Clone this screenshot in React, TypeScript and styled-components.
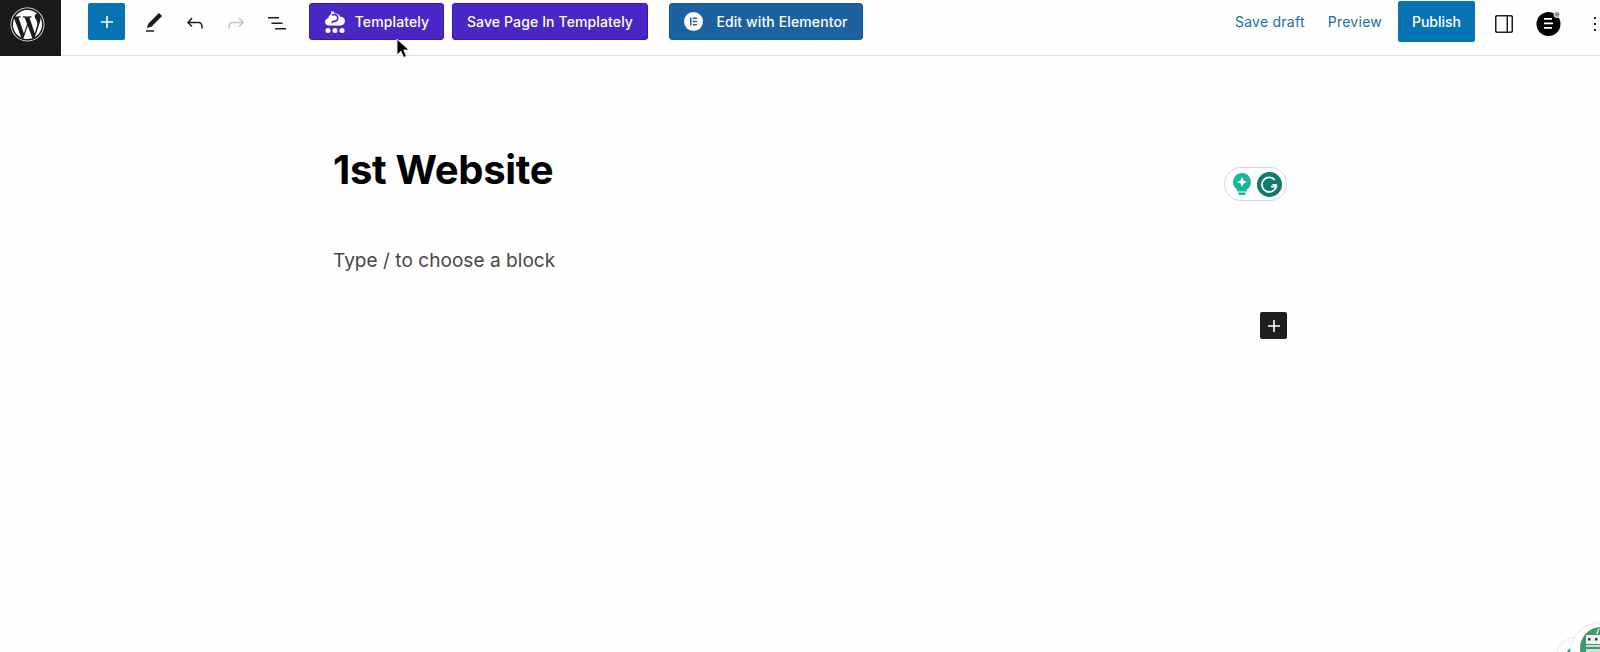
import React from 'react';
import styled, { createGlobalStyle } from 'styled-components';
import { FaWordpress } from 'react-icons/fa';

const GlobalStyle = createGlobalStyle`
  html, body {
    margin: 0;
    padding: 0;
    height: 100%;
    overflow: hidden;
    background: #fefefe;
    font-family: 'Inter', sans-serif;
  }
`;

const Page = styled.div`
  position: relative;
  width: 1600px;
  height: 652px;
  overflow: hidden;
`;

// the bar runs a little past the window, the kebab menu sits almost on the edge
const TopBar = styled.header`
  display: flex;
  justify-content: space-between;
  align-items: flex-start;
  width: 1607px;
  height: 56px;
  box-sizing: border-box;
  border-bottom: 1px solid #e2e2e2;
`;

const BarSide = styled.div`
  display: flex;
  align-items: flex-start;
`;

const LogoTile = styled.div`
  display: flex;
  align-items: center;
  justify-content: center;
  box-sizing: border-box;
  width: 61px;
  height: 56px;
  padding: 0 6px 7px 0;
  background: #1a1a1a;
  color: #fff;
  font-size: 35px;
`;

const AddButton = styled.button`
  display: flex;
  align-items: center;
  justify-content: center;
  width: 37px;
  height: 37px;
  margin: 3px 8px 0 27px;
  padding: 0;
  border: 0;
  border-radius: 2px;
  background: #0873b3;
  color: #fff;
`;

const ToolIcon = styled.button<{ $muted?: boolean }>`
  display: flex;
  align-items: center;
  justify-content: center;
  width: 41px;
  height: 37px;
  margin-top: 4px;
  padding: 0;
  border: 0;
  background: none;
  color: ${p => (p.$muted ? '#c4c4c4' : '#1e1e1e')};
`;

const ActionButton = styled.button<{ $bg: string; $edge: string; $width: number; $left: number; $gap?: number }>`
  display: flex;
  align-items: center;
  justify-content: center;
  gap: ${p => p.$gap ?? 0}px;
  box-sizing: border-box;
  width: ${p => p.$width}px;
  height: 37px;
  margin: 3px 0 0 ${p => p.$left}px;
  padding: 0;
  border: 1px solid ${p => p.$edge};
  border-radius: 3px;
  background: ${p => p.$bg};
  color: #fff;
  font: 500 14px 'Inter', sans-serif;
  letter-spacing: 0.12px;
  white-space: nowrap;
`;

const TextLink = styled.span<{ $left: number }>`
  margin: 13px 0 0 ${p => p.$left}px;
  color: #1b6ea6;
  font-size: 14px;
  line-height: 17px;
  letter-spacing: 0.25px;
`;

const PublishButton = styled.button`
  width: 77px;
  height: 41px;
  margin: 1px 0 0 16px;
  padding: 0;
  border: 0;
  border-radius: 2px;
  background: #0873b3;
  color: #fff;
  font: 500 14px 'Inter', sans-serif;
`;

const SideIcon = styled.div<{ $left: number; $top: number; $size: number }>`
  display: flex;
  margin: ${p => p.$top}px 0 0 ${p => p.$left}px;
  width: ${p => p.$size}px;
  height: ${p => p.$size}px;
  color: #1e1e1e;
`;

const Editor = styled.main`
  display: flex;
  flex-direction: column;
  width: 954px;
  margin-left: 333px;
  padding-top: 90px;
`;

const PostTitle = styled.h1`
  margin: 0;
  color: #000;
  font-size: 40px;
  font-weight: 700;
  line-height: 48px;
  letter-spacing: -0.3px;
`;

const Placeholder = styled.p`
  margin: 52px 0 0;
  color: #46464a;
  font-size: 19px;
  line-height: 30px;
  letter-spacing: 0.05px;
`;

const InserterRow = styled.div`
  display: flex;
  justify-content: flex-end;
  margin-top: 36px;
`;

const Inserter = styled.button`
  display: flex;
  align-items: center;
  justify-content: center;
  width: 27px;
  height: 27px;
  padding: 0;
  border: 0;
  border-radius: 2px;
  background: #1e1e1e;
  color: #fff;
`;

const GrammarlyPill = styled.div`
  position: absolute;
  left: 1224px;
  top: 167px;
  display: flex;
  align-items: center;
  gap: 5px;
  box-sizing: border-box;
  width: 63px;
  height: 34px;
  padding-left: 7px;
  border: 1px solid #cfd8dc;
  border-radius: 17px;
  background: #fff;
`;

const Cursor = styled.svg`
  position: absolute;
  left: 396px;
  top: 38px;
`;

const CornerBubble = styled.div<{ $left: number; $top: number; $size: number }>`
  position: absolute;
  left: ${p => p.$left}px;
  top: ${p => p.$top}px;
  box-sizing: border-box;
  width: ${p => p.$size}px;
  height: ${p => p.$size}px;
  border: 1px solid #e3e8e6;
  border-radius: 50%;
  background: #fff;
`;

const PlusGlyph = ({ size }: { size: number }) => (
  <svg width={size} height={size} viewBox="0 0 24 24" fill="currentColor">
    <path d="M18 11.2h-5.2V6h-1.6v5.2H6v1.6h5.2V18h1.6v-5.2H18z" />
  </svg>
);

const Glyph = ({ d }: { d: string }) => (
  <svg width="24" height="24" viewBox="0 0 24 24" fill="currentColor">
    <path d={d} />
  </svg>
);

const TemplatelyMark = () => (
  <svg width="22" height="24" viewBox="0 0 22 24" fill="#fff">
    <path d="M5 15.5c-2.300 0-4-1.500-4-3.700 0-1.900 1.400-3.400 3.300-3.600.2-1.900 1.300-3.400 2.900-4.200L7 1.500h3l.3 1.700c2.600-.4 5 1 5.900 3.500 2.600-.1 4.800 1.600 4.800 4.400 0 2.600-2 4.400-4.600 4.400z" />
    <path d="M8 5.500a3.400 3.400 0 1 1 1.500 5.700l-1.800 1.600" fill="none" stroke="#4a26c4" strokeWidth="1.600" />
    <circle cx="4" cy="20.5" r="2.500" />
    <circle cx="11" cy="20.5" r="2.500" />
    <circle cx="18" cy="20.5" r="2.500" />
  </svg>
);

const ElementorMark = () => (
  <svg width="19" height="19" viewBox="0 0 19 19">
    <circle cx="9.5" cy="9.5" r="9.5" fill="#fff" />
    <path fill="#1c62a0" d="M6 5.500h1.500v8H6zM9 5.500h4V7H9zM9 8.700h4v1.500H9zM9 12h4v1.500H9z" />
  </svg>
);

const ElementsAvatar = () => (
  <svg width="27" height="27" viewBox="0 0 27 27">
    <circle cx="12.5" cy="14" r="12" fill="#000" />
    <path fill="#fff" d="M8 8h8v1.800H8zM8 12.500h9v1.800H8zM8 17h8v1.800H8z" />
    <circle cx="21" cy="4.500" r="3" fill="#8f8f8f" stroke="#fff" />
  </svg>
);

const Bulb = () => (
  <svg width="20" height="24" viewBox="0 0 20 24">
    <path fill="#15b89a" d="M10 1a9 9 0 0 0-5.500 16c.8.7.8 1.500.8 2.500h9.400c0-1 0-1.800.8-2.500A9 9 0 0 0 10 1z" />
    <path fill="#15b89a" d="M6 20.500h8l-1 2.500H7z" />
    <path fill="#fff" d="M10 5l1.500 3.500L15 10l-3.500 1.500L10 15l-1.500-3.500L5 10l3.500-1.500z" />
  </svg>
);

const GrammarlyBadge = () => (
  <svg width="25" height="25" viewBox="0 0 24 24">
    <circle cx="12" cy="12" r="12" fill="#127a68" />
    <path fill="none" stroke="#fff" strokeWidth="1.700" d="M17 7.500a7 7 0 1 0 1.500 6.500h-5" />
    <path fill="#fff" d="M14 11.500h5v4.500z" />
  </svg>
);

const RobotFace = () => (
  <svg width="30" height="29" viewBox="0 0 30 29">
    <circle cx="30" cy="25" r="21" fill="#3e9a68" />
    <rect x="15" y="12" width="15" height="9" rx="1" fill="#f2f2f2" />
    <rect x="17" y="15" width="2.500" height="2.500" fill="#2f3b3a" />
    <rect x="24" y="15" width="2.500" height="2.500" fill="#2f3b3a" />
    <rect x="15" y="22" width="15" height="2" fill="#cfe0d6" />
    <rect x="15" y="26" width="15" height="3" fill="#cfe0d6" />
    <path d="M25 11l2.500-6 1 .4-2 5.600z" fill="#f2f2f2" />
  </svg>
);

const TealSpot = () => (
  <svg width="24" height="15" viewBox="0 0 24 15">
    <circle cx="19" cy="17" r="10" fill="#15b89a" />
  </svg>
);

export default function App() {
  return (
    <Page>
      <GlobalStyle />
      <TopBar>
        <BarSide>
          <LogoTile>
            <FaWordpress />
          </LogoTile>
          <AddButton>
            <PlusGlyph size={24} />
          </AddButton>
          <ToolIcon>
            <Glyph d="M20.1 5.1L16.9 2 6.2 12.7l-1.3 4.400 4.500-1.300L20.100 5.100zM4 20.800h8v-1.500H4v1.500z" />
          </ToolIcon>
          <ToolIcon>
            <Glyph d="M18.3 11.7c-.6-.6-1.400-.9-2.300-.9H6.700l2.900-3.300-1.100-1-4.500 5L8.500 16l1-1-2.700-2.700H16c.5 0 .9.2 1.300.5 1 1 1 3.400 1 4.500v.3h1.500v-.2c0-1.500 0-4.300-1.500-5.700z" />
          </ToolIcon>
          <ToolIcon $muted>
            <Glyph d="M15.6 6.5l-1.100 1 2.900 3.300H8c-.9 0-1.700.3-2.300.9-1.400 1.500-1.400 4.200-1.400 5.600v.2h1.500v-.3c0-1.100 0-3.500 1-4.500.3-.3.7-.5 1.300-.5h9.200L14.500 15l1.100 1.100 4.600-4.600-4.600-5z" />
          </ToolIcon>
          <ToolIcon>
            <Glyph d="M3 6h11v1.500H3V6zm3.500 5.500h11V13h-11v-1.500zM21 17H10v1.500h11V17z" />
          </ToolIcon>
          <ActionButton $bg="#4a26c4" $edge="#3a18b0" $width={135} $left={12} $gap={9}>
            <TemplatelyMark />
            Templately
          </ActionButton>
          <ActionButton $bg="#4a26c4" $edge="#3a18b0" $width={196} $left={8}>
            Save Page In Templately
          </ActionButton>
          <ActionButton $bg="#1c62a0" $edge="#1a5a92" $width={194} $left={21} $gap={13}>
            <ElementorMark />
            Edit with Elementor
          </ActionButton>
        </BarSide>
        <BarSide>
          <TextLink $left={0}>Save draft</TextLink>
          <TextLink $left={23}>Preview</TextLink>
          <PublishButton>Publish</PublishButton>
          <SideIcon $left={17} $top={12} $size={24}>
            <Glyph d="M19 3H5c-1.100 0-2 .9-2 2v14c0 1.100.9 2 2 2h14c1.100 0 2-.9 2-2V5c0-1.100-.9-2-2-2zM4.500 19V5c0-.3.2-.5.5-.5h9.500v15H5c-.3 0-.5-.2-.5-.5zm15 0c0 .3-.2.5-.5.5h-3v-15h3c.3 0 .5.2.5.5v14z" />
          </SideIcon>
          <SideIcon $left={20} $top={10} $size={27}>
            <ElementsAvatar />
          </SideIcon>
          <SideIcon $left={20} $top={12} $size={24}>
            <Glyph d="M13 19h-2v-2h2v2zm0-6h-2v-2h2v2zm0-6h-2V5h2v2z" />
          </SideIcon>
        </BarSide>
      </TopBar>

      <Editor>
        <PostTitle>1st Website</PostTitle>
        <Placeholder>Type / to choose a block</Placeholder>
        <InserterRow>
          <Inserter>
            <PlusGlyph size={24} />
          </Inserter>
        </InserterRow>
      </Editor>

      <GrammarlyPill>
        <Bulb />
        <GrammarlyBadge />
      </GrammarlyPill>

      <Cursor width="14" height="22" viewBox="0 0 14 22">
        <path d="M1 1v16l4-3.800 2.600 6.300 2.800-1.200L7.800 12H13z" fill="#000" stroke="#e8e8e8" strokeWidth="1" />
      </Cursor>

      <CornerBubble $left={1556} $top={637} $size={40}>
        <TealSpot />
      </CornerBubble>
      <CornerBubble $left={1570} $top={622} $size={60}>
        <RobotFace />
      </CornerBubble>
    </Page>
  );
}
